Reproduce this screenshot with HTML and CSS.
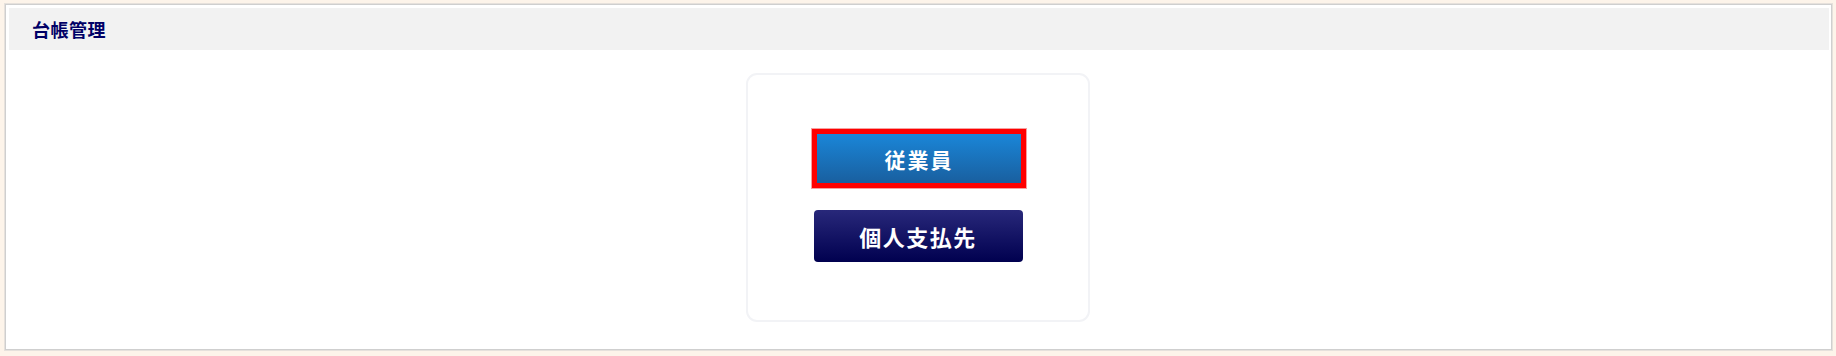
FILE: index.html
```html
<!DOCTYPE html>
<html lang="ja">
<head>
<meta charset="utf-8">
<title>台帳管理</title>
<link rel="stylesheet" href="styles.css">
</head>
<body>
<div class="frame">
  <div class="header"><h1 class="title">台帳管理</h1></div>
  <div class="content">
    <div class="card">
      <button class="btn btn-employee" type="button">従業員</button>
      <button class="btn btn-payee" type="button">個人支払先</button>
    </div>
  </div>
</div>
</body>
</html>
```
FILE: styles.css
```css
html, body {
  margin: 0;
  padding: 0;
}
body {
  background: #fdf4ea;
  width: 1836px;
  height: 356px;
  font-family: "Noto Sans CJK JP", "Noto Sans", sans-serif;
  padding-top: 4px;
  padding-left: 5px;
  box-sizing: border-box;
}
.frame {
  width: 1827px;
  height: 346px;
  box-sizing: border-box;
  border: 1px solid #cfcfcf;
  box-shadow: 0 0 0 1px #e6e1dc;
  background: #ffffff;
  padding: 3px 2px 0 3px;
  display: flex;
  flex-direction: column;
}
.header {
  background: #f2f2f2;
  height: 42px;
  display: flex;
  align-items: center;
  padding-left: 23px;
}
.title {
  margin: 0;
  font-size: 18px;
  font-weight: bold;
  color: #000066;
  letter-spacing: 0.5px;
  line-height: 1;
}
.content {
  display: flex;
  justify-content: center;
  padding-top: 23px;
  padding-right: 2px;
}
.card {
  width: 344px;
  height: 249px;
  box-sizing: border-box;
  border: 2px solid #f2f3f6;
  border-radius: 11px;
  display: flex;
  flex-direction: column;
  align-items: center;
  padding-top: 54px;
  gap: 22px;
}
.btn {
  font-family: "Noto Sans CJK JP", sans-serif;
  font-weight: bold;
  color: #ffffff;
  cursor: pointer;
  padding: 0;
  display: flex;
  align-items: center;
  justify-content: center;
  line-height: 1;
}
.btn-employee {
  width: 214px;
  height: 59px;
  border: 5px solid #ff0000;
  box-shadow: 0 0 0 1px #f5a0a0;
  background: linear-gradient(to bottom, #1a86d8, #195f9f);
  font-size: 21px;
  letter-spacing: 2px;
  margin-left: 2px;
  padding-top: 1px;
}
.btn-payee {
  width: 209px;
  height: 52px;
  border: none;
  border-radius: 4px;
  background: linear-gradient(to bottom, #28287a, #00004f);
  font-size: 22px;
  letter-spacing: 1.5px;
}
```
